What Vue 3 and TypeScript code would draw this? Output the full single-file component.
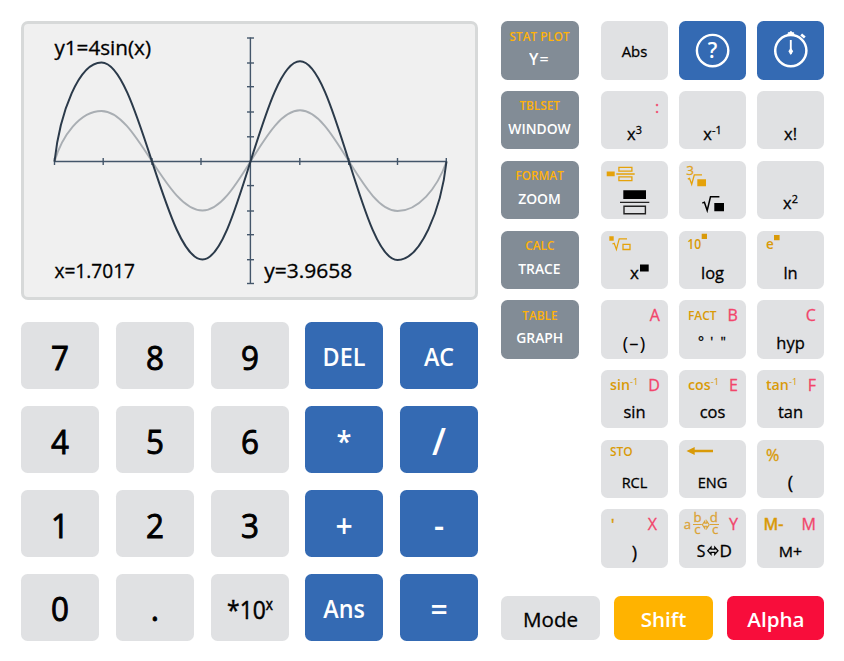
<script setup lang="ts">
interface Key {
  label: string
  kind?: string
  sup?: string
}
interface FnKey extends Key {
  id: string
  shift?: string
  shiftSup?: string
  alpha?: string
}

const pad: Key[] = [
  { label: '7' }, { label: '8' }, { label: '9' }, { label: 'DEL', kind: 'blue word' }, { label: 'AC', kind: 'blue word' },
  { label: '4' }, { label: '5' }, { label: '6' }, { label: '*', kind: 'blue star' }, { label: '/', kind: 'blue slash' },
  { label: '1' }, { label: '2' }, { label: '3' }, { label: '+', kind: 'blue plus' }, { label: '-', kind: 'blue minus' },
  { label: '0' }, { label: '.' }, { label: '*10', sup: 'x', kind: 'exp' }, { label: 'Ans', kind: 'blue word' }, { label: '=', kind: 'blue equals' },
]

const menu = [
  { top: 'STAT PLOT', label: 'Y=', kind: 'large' },
  { top: 'TBLSET', label: 'WINDOW', kind: '' },
  { top: 'FORMAT', label: 'ZOOM', kind: '' },
  { top: 'CALC', label: 'TRACE', kind: '' },
  { top: 'TABLE', label: 'GRAPH', kind: '' },
]

const fns: FnKey[] = [
  { id: 'abs', label: 'Abs', kind: 'single caps' },
  { id: 'help', label: '', kind: 'blue' },
  { id: 'timer', label: '', kind: 'blue' },
  { id: 'cube', label: 'x', sup: '3', alpha: ':' },
  { id: 'inv', label: 'x', sup: '-1' },
  { id: 'factorial', label: 'x!' },
  { id: 'frac', label: '' },
  { id: 'sqrt', label: '' },
  { id: 'square', label: 'x', sup: '2' },
  { id: 'power', label: '' },
  { id: 'log', label: 'log' },
  { id: 'ln', label: 'ln' },
  { id: 'neg', label: '(–)', alpha: 'A' },
  { id: 'dms', label: '', shift: 'FACT', kind: 'small-shift', alpha: 'B' },
  { id: 'hyp', label: 'hyp', alpha: 'C' },
  { id: 'sin', label: 'sin', shift: 'sin', shiftSup: '-1', alpha: 'D' },
  { id: 'cos', label: 'cos', shift: 'cos', shiftSup: '-1', alpha: 'E' },
  { id: 'tan', label: 'tan', shift: 'tan', shiftSup: '-1', alpha: 'F' },
  { id: 'rcl', label: 'RCL', shift: 'STO', kind: 'caps small-shift raised' },
  { id: 'eng', label: 'ENG', kind: 'caps' },
  { id: 'open', label: '(', shift: '%', kind: 'paren plain' },
  { id: 'close', label: ')', shift: "'", alpha: 'X', kind: 'paren' },
  { id: 'sd', label: '', alpha: 'Y' },
  { id: 'mplus', label: 'M+', shift: 'M-', alpha: 'M', kind: 'caps mem' },
]

const darkWave =
  'M54.5 161.5C60 112 79 62.5 101.5 62.5C119.8 62.5 135.5 110.8 152 161.5C168.5 211.6 184.2 259.5 202.5 259.5C219.9 259.5 234.9 211.6 250.5 161.5C266.6 110.5 282 61.3 300 61.3C317.7 61.3 333 110.5 349 161.5C364.8 211.9 379.9 260 397.5 260C420 260 441 211 446.5 161.5'
const lightWave =
  'M54.5 161.5C62 136 80 111 101.5 111C119.8 111 135.5 136 152 161.5C168.5 186.6 184.2 210.5 202.5 210.5C219.9 210.5 234.9 186.6 250.5 161.5C266.6 135.7 282 110.3 300 110.3C317.7 110.3 333 135.7 349 161.5C364.8 186.6 379.9 211 397.5 211C418 211 437 189 446.5 161.5'
const xTicks = [54.5, 103.2, 152, 201, 299.8, 348.7, 397.5, 446.3]
const yTicks = [38, 63, 86.7, 112, 136.8, 185.6, 211, 234.7, 259.7, 283.5]
</script>

<template>
  <main class="calc">
    <section class="left">
      <div class="screen">
        <svg viewBox="24 24 451.5 272.5" width="451.5" height="272.5">
          <path :d="lightWave" fill="none" stroke="#a9aeb3" stroke-width="1.9" />
          <g stroke="#44566a" stroke-width="1.4">
            <path d="M54 161.5H447M250.4 37.5V284" />
            <path v-for="x in xTicks" :key="'x' + x" :d="`M${x} 158v7`" />
            <path v-for="y in yTicks" :key="'y' + y" :d="`M247 ${y}h7`" />
          </g>
          <path :d="darkWave" fill="none" stroke="#2b3a4a" stroke-width="2" />
          <text x="54.4" y="54.7" textLength="96.6" lengthAdjust="spacingAndGlyphs">y1=4sin(x)</text>
          <text x="54.4" y="277.6" textLength="80.6" lengthAdjust="spacingAndGlyphs">x=1.7017</text>
          <text x="264.2" y="277.6" textLength="88" lengthAdjust="spacingAndGlyphs">y=3.9658</text>
        </svg>
      </div>
      <div class="pad">
        <button v-for="k in pad" :key="k.label" class="key num" :class="k.kind">
          <span>{{ k.label }}<sup v-if="k.sup">{{ k.sup }}</sup></span>
        </button>
      </div>
    </section>

    <section class="right">
      <div class="upper">
        <div class="menu">
          <button v-for="m in menu" :key="m.label" class="key menu-key" :class="m.kind">
            <span class="menu-top">{{ m.top }}</span>
            <span class="menu-label">{{ m.label }}</span>
          </button>
        </div>
        <div class="fns">
          <button v-for="k in fns" :key="k.id" class="key fn" :class="[k.kind, 'k-' + k.id]">
            <svg v-if="k.id === 'help'" class="face" viewBox="0 0 67 58.4">
              <circle cx="33.6" cy="29.6" r="15.7" fill="none" stroke="#fff" stroke-width="2.4" />
              <text x="33.5" y="37.4" text-anchor="middle" fill="#fff" font-size="21" class="semi">?</text>
            </svg>
            <svg v-else-if="k.id === 'timer'" class="face" viewBox="0 0 67 58.4">
              <circle cx="33.8" cy="29.6" r="15.6" fill="none" stroke="#fff" stroke-width="2.5" />
              <path d="M31.2 14v-2.3h1.2a1.6 1.6 0 0 1 3 0h1.3V14z" fill="#fff" stroke="#fff" />
              <path d="M44.2 13.4l3.6 3.2" stroke="#fff" stroke-width="2.7" />
              <path d="M33.8 19v14" stroke="#fff" stroke-width="1.9" />
              <path d="M31.4 30.2l2.4-3.4 2.4 3.4-2.4 3.8z" fill="#fff" />
            </svg>
            <svg v-else-if="k.id === 'frac'" class="face" viewBox="0 0 67 58.4">
              <g fill="none" stroke="#e5a20a" stroke-width="1.3">
                <path d="M17.9 6.4h13v3.8h-13zM17.9 15.9h13v3.8h-13zM15.3 13h18.4" />
              </g>
              <path d="M5.7 10.5h8v4.8h-8z" fill="#e5a20a" />
              <path d="M22.3 29.3H45V38H22.3z" />
              <path d="M19 41.4h29.3M23 45.3h21.4v7.5H23z" fill="none" stroke="#222" stroke-width="1.4" />
            </svg>
            <svg v-else-if="k.id === 'sqrt'" class="face" viewBox="0 0 67 58.4">
              <text x="7.3" y="14.2" font-size="13.5" fill="#e5a20a" class="gold">3</text>
              <path d="M8.8 18.1l1.7-.8 2.2 6L15.3 13.9H23" fill="none" stroke="#e5a20a" stroke-width="1.3" />
              <path d="M18.3 18.3H27v7h-8.7z" fill="#e5a20a" />
              <path d="M23.3 42.2l2.1-1 2.8 8.3 3.3-13.7h8.9" fill="none" stroke="#000" stroke-width="1.5" />
              <path d="M35.3 42H45v8.3h-9.7z" />
            </svg>
            <svg v-else-if="k.id === 'power'" class="face" viewBox="0 0 67 58.4">
              <path d="M8.3 5.3h4.4v4.4H8.3z" fill="#e5a20a" />
              <path d="M11.4 13l1.8-.8 2.2 6.3 2.8-10.7H26" fill="none" stroke="#e5a20a" stroke-width="1.2" />
              <path d="M22 13.3h7v5.2h-7z" fill="none" stroke="#e5a20a" stroke-width="1.3" />
              <text x="29" y="48.2" font-size="17" class="ink">x</text>
              <path d="M39 33.5h8.7v7H39z" />
            </svg>
            <svg v-else-if="k.id === 'dms'" class="face" viewBox="0 0 67 58.4">
              <text x="19" y="46.6" font-size="14" class="ink">°</text>
              <text x="31.2" y="46.3" font-size="13.5" class="ink">'</text>
              <text x="41.6" y="46.3" font-size="13.5" class="ink">"</text>
            </svg>
            <svg v-else-if="k.id === 'log'" class="face" viewBox="0 0 67 58.4">
              <text x="8.2" y="18" font-size="13.5" class="semi" fill="#d99a08" textLength="14" lengthAdjust="spacingAndGlyphs">10</text>
              <path d="M22.7 2.7H28V8h-5.3z" fill="#d99a08" />
            </svg>
            <svg v-else-if="k.id === 'ln'" class="face" viewBox="0 0 67 58.4">
              <text x="9" y="18" font-size="13.5" class="semi" fill="#d99a08">e</text>
              <path d="M17 4h5.6v5.3H17z" fill="#d99a08" />
            </svg>
            <svg v-else-if="k.id === 'eng'" class="face" viewBox="0 0 67 58.4">
              <path d="M7.5 11l8.2-4v2.8H34v2.4H15.7V15z" fill="#d99a08" />
            </svg>
            <svg v-else-if="k.id === 'sd'" class="face" viewBox="0 0 67 58.4">
              <g fill="#dba336" font-size="13.2" class="gold">
                <text x="4.8" y="19.6">a</text>
                <text x="14.4" y="13">b</text>
                <text x="15.2" y="25.2">c</text>
                <text x="30.7" y="13">d</text>
                <text x="33" y="25.2">c</text>
                <path d="M14 14.9h8.8v1.2H14zM31 14.9h9v1.2h-9z" />
              </g>
              <path d="M25.8 12L23.4 15.7l2.4 3.7v-2.1h2v2.1l2.4-3.7-2.4-3.7v2.1h-2z" fill="none" stroke="#dba336" stroke-width="1.1" />
              <text x="17.8" y="48" font-size="15.8" class="ink">S</text>
              <path d="M32 38.2l-3.2 3.6 3.2 3.6v-2h3.8v2l3.2-3.6-3.2-3.6v2H32z" fill="none" stroke="#000" stroke-width="1.3" />
              <text x="40.5" y="48" font-size="15.8" class="ink" textLength="12.4" lengthAdjust="spacingAndGlyphs">D</text>
            </svg>
            <span class="legends">
              <span class="shift">{{ k.shift }}<sup v-if="k.shiftSup">{{ k.shiftSup }}</sup></span>
              <span class="alpha">{{ k.alpha }}</span>
            </span>
            <span class="main">{{ k.label }}<sup v-if="k.sup">{{ k.sup }}</sup></span>
          </button>
        </div>
      </div>
      <div class="modes">
        <button class="key mode">Mode</button>
        <button class="key mode amber">Shift</button>
        <button class="key mode red">Alpha</button>
      </div>
    </section>
  </main>
</template>

<style>
body { background: #fff; }
</style>

<style scoped>
.calc {
  box-sizing: border-box;
  width: 844px;
  height: 661px;
  padding: 21.3px 0 0 20.8px;
  display: flex;
  gap: 22.3px;
  font-family: 'Open Sans', 'Noto Sans', sans-serif;
  color: #000;
  overflow: hidden;
}
.left { width: 457.5px; }
.screen {
  box-sizing: border-box;
  height: 278.5px;
  border: 3px solid #d7d9d9;
  border-radius: 7px;
  background: #f0f0f0;
  margin-bottom: 22.7px;
}
.screen svg { display: block; }
.screen text { font-size: 19.6px; stroke: #000; stroke-width: 0.3px; }

.key {
  border: 0;
  margin: 0;
  padding: 0;
  border-radius: 6.5px;
  background: #e0e1e3;
  color: #000;
  font-family: inherit;
  font-weight: 400;
  -webkit-text-stroke: 0.3px currentColor;
  white-space: nowrap;
}
.blue { background: #346ab3; color: #fff; }
.pad {
  display: grid;
  grid-template-columns: repeat(5, 78px);
  grid-auto-rows: 67px;
  gap: 16.7px 16.87px;
}
.num { font-size: 33.4px; line-height: 67px; -webkit-text-stroke-width: 0.9px; }
.num span { display: block; transform: scaleX(0.94); padding-top: 1.4px; height: 65px; }
.num.blue { font-weight: 600; -webkit-text-stroke-width: 0; }
.num.word { font-size: 24.8px; }
.num.word span { padding-top: 0; }
.num.star { font-size: 29px; }
.num.star span { padding-top: 0; }
.num.slash { font-size: 38px; }
.num.slash span { padding-top: 0; }
.num.plus, .num.equals { font-size: 32px; }
.num.exp { font-size: 26px; -webkit-text-stroke-width: 0.5px; }
.num.exp span { padding-top: 2px; transform: scaleX(0.88); }
.num sup { font-size: 15.5px; line-height: 0; vertical-align: 9px; }

.upper { display: flex; gap: 22.3px; }
.menu {
  display: grid;
  grid-template-columns: 78px;
  grid-auto-rows: 58.4px;
  align-content: start;
  gap: 11.35px;
}
.menu-key {
  display: flex;
  flex-direction: column;
  align-items: center;
  background: #828c96;
  color: #fff;
  font-weight: 600;
  -webkit-text-stroke-width: 0;
}
.menu-top {
  font-size: 12px;
  line-height: 16px;
  padding-top: 7.4px;
  color: #ffb20a;
  transform: scaleX(0.98);
}
.menu-label {
  font-size: 14px;
  line-height: 20px;
  padding-top: 4.8px;
  transform: scaleX(0.99);
}
.large .menu-label { font-size: 16px; letter-spacing: 1px; }

.fns {
  display: grid;
  grid-template-columns: repeat(3, 67px);
  grid-auto-rows: 58.4px;
  gap: 11.35px 11px;
}
.fn {
  display: grid;
  grid-template: 28px 28px / 67px;
  align-content: start;
  overflow: hidden;
}
.face { grid-area: 1 / 1 / 3 / 2; width: 67px; height: 58.4px; display: block; -webkit-text-stroke-width: 0; }
.semi { font-weight: 600; }
.ink { stroke: #000; stroke-width: 0.3px; }
.gold text, text.gold { stroke: #dba336; stroke-width: 0.3px; }
.legends {
  grid-area: 1 / 1;
  display: flex;
  justify-content: space-between;
  padding: 0.7px 8px 0 8.7px;
  line-height: 28px;
  font-size: 16px;
}
.shift { color: #d99a08; font-size: 14.5px; font-weight: 600; -webkit-text-stroke-width: 0; transform: scaleX(0.98); transform-origin: left; }
.alpha { color: #f2456b; }
.fn sup { font-size: 0.66em; font-weight: 400; line-height: 0; vertical-align: 0.5em; }
.main {
  grid-area: 2 / 1;
  font-size: 16.8px;
  line-height: 28px;
  padding-top: 0.5px;
  text-align: center;
  transform: scaleX(0.98);
}
.caps .main { font-size: 14.8px; padding-top: 0.6px; }
.single .main { margin-top: -12.5px; font-size: 15.2px; }
.small-shift .shift { font-size: 12.2px; padding-top: 0.6px; }
.raised .shift { margin-top: -3px; }
.plain .shift { font-size: 16.5px; font-weight: 400; -webkit-text-stroke-width: 0.3px; padding-top: 0.6px; }
.mem .shift { font-size: 16px; margin-left: -2px; -webkit-text-stroke-width: 0.3px; transform: scaleX(1); }
.mem .main { transform: scaleX(1.07); padding-top: 0; }
.paren .main { font-size: 18.5px; }
.k-neg .main { font-size: 17.5px; letter-spacing: 1px; transform: scaleX(1.06); -webkit-text-stroke-width: 0.1px; }
.k-close .legends { padding-right: 11px; }
.k-close .shift { margin-left: 1px; -webkit-text-stroke-width: 0.3px; }
.k-cube .legends { padding-top: 1.5px; }
.k-cube .alpha { transform: translateX(-0.8px); }

.modes {
  display: grid;
  grid-template-columns: 99px 99px 97.6px;
  grid-auto-rows: 44.5px;
  gap: 14px;
  margin-top: 28px;
}
.mode { font-size: 20.6px; line-height: 44.5px; padding: 0.8px 0 0 1px; }
.amber { background: #ffb300; color: #fff; font-weight: 600; -webkit-text-stroke-width: 0; }
.red { background: #f80d3b; color: #fff; font-weight: 600; -webkit-text-stroke-width: 0; }
</style>
